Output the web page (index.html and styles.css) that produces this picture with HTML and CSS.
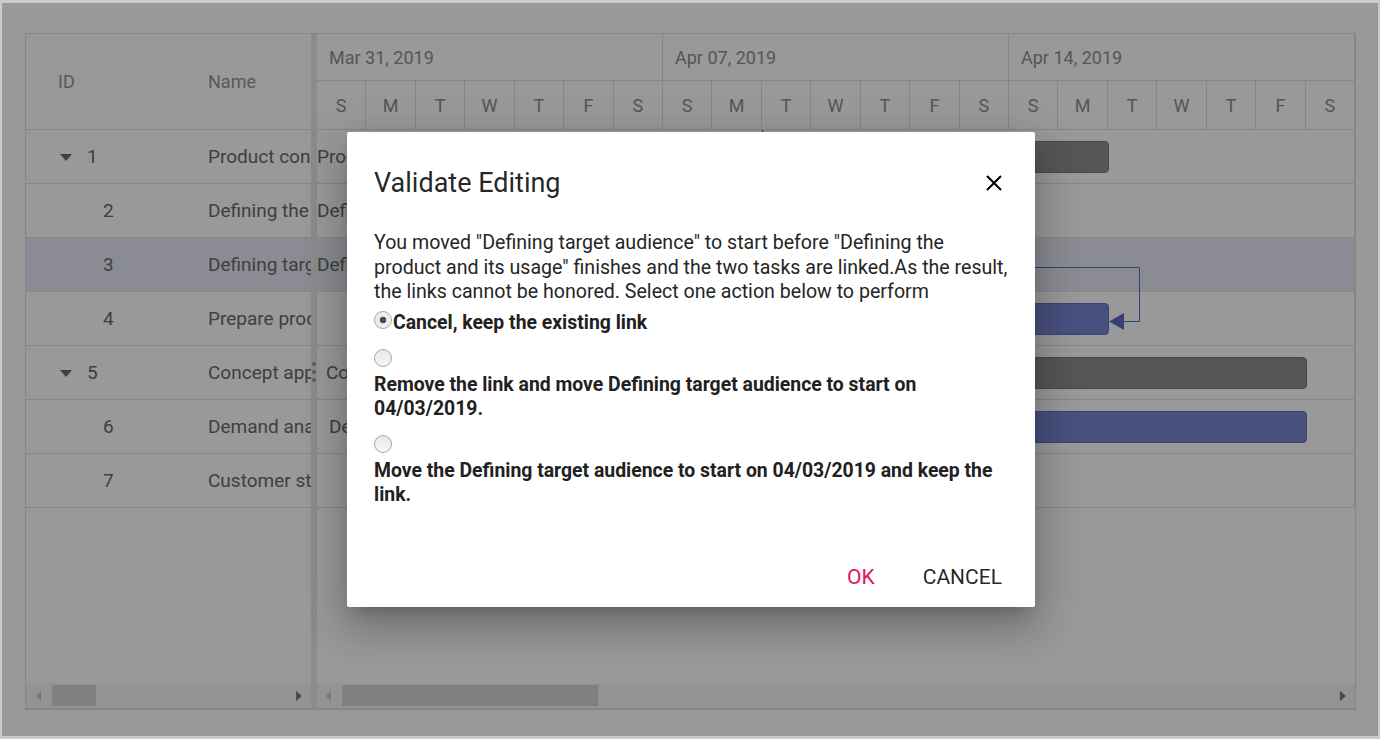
FILE: index.html
```html
<!DOCTYPE html>
<html lang="en">
<head>
<meta charset="utf-8">
<title>Gantt - Validate Editing</title>
<link rel="stylesheet" href="styles.css">
</head>
<body>
<div class="stage">
  <div class="gantt">
    <div class="grid-pane">
      <div class="grid-header">
        <div class="hcell id-col">ID</div>
        <div class="hcell name-col">Name</div>
      </div>
      <div class="grid-body">
        <div class="grow"><div class="cell id-col parent"><span class="expand"></span>1</div><div class="cell name-col">Product concept</div></div>
        <div class="grow"><div class="cell id-col child">2</div><div class="cell name-col">Defining the product and its usage</div></div>
        <div class="grow selected"><div class="cell id-col child">3</div><div class="cell name-col">Defining target audience</div></div>
        <div class="grow"><div class="cell id-col child">4</div><div class="cell name-col">Prepare product sketch and notes</div></div>
        <div class="grow"><div class="cell id-col parent"><span class="expand"></span>5</div><div class="cell name-col">Concept approval</div></div>
        <div class="grow"><div class="cell id-col child">6</div><div class="cell name-col">Demand analysis</div></div>
        <div class="grow"><div class="cell id-col child">7</div><div class="cell name-col">Customer strength</div></div>
      </div>
      <div class="empty"></div>
      <div class="hscroll grid-scroll">
        <span class="arr-left"></span>
        <span class="thumb grid-thumb"></span>
        <span class="fill"></span>
        <span class="arr-right"></span>
      </div>
    </div>
    <div class="splitter">
      <span class="dot"></span><span class="dot"></span><span class="dot"></span>
    </div>
    <div class="chart-pane">
      <div class="timeline">
        <div class="tier-top">
          <div class="tcell">Mar 31, 2019</div>
          <div class="tcell">Apr 07, 2019</div>
          <div class="tcell">Apr 14, 2019</div>
        </div>
        <div class="tier-bottom">
          <div class="dcell">S</div><div class="dcell">M</div><div class="dcell">T</div><div class="dcell">W</div><div class="dcell">T</div><div class="dcell">F</div><div class="dcell">S</div>
          <div class="dcell">S</div><div class="dcell">M</div><div class="dcell">T</div><div class="dcell">W</div><div class="dcell">T</div><div class="dcell">F</div><div class="dcell">S</div>
          <div class="dcell">S</div><div class="dcell">M</div><div class="dcell">T</div><div class="dcell">W</div><div class="dcell">T</div><div class="dcell">F</div><div class="dcell">S</div>
        </div>
      </div>
      <div class="chart-body">
        <div class="crow"><span class="tlabel">Product concept</span><span class="bar parent-bar" style="left:300px;width:492px"></span></div>
        <div class="crow"><span class="tlabel">Defining the product and its usage</span><span class="bar child-bar" style="left:300px;width:200px"></span></div>
        <div class="crow selected"><span class="tlabel">Defining target audience</span><span class="bar child-bar" style="left:450px;width:150px"></span></div>
        <div class="crow"><span class="bar child-bar" style="left:500px;width:292px"></span></div>
        <div class="crow"><span class="tlabel ind1">Concept approval</span><span class="bar parent-bar" style="left:500px;width:490px"></span></div>
        <div class="crow"><span class="tlabel ind2">Demand analysis</span><span class="bar child-bar" style="left:500px;width:490px"></span></div>
        <div class="crow"><span class="bar child-bar" style="left:560px;width:120px"></span></div>
        <span class="today"></span>
        <svg class="connector" width="1038" height="378" viewBox="0 0 1038 378">
          <path d="M600 137.5 H822.5 V191.5 H806" fill="none" stroke="#5c6bc0" stroke-width="1"/>
          <path d="M792 191.5 L807 183 L807 200 Z" fill="#5c6bc0"/>
        </svg>
      </div>
      <div class="empty"></div>
      <div class="hscroll chart-scroll">
        <span class="arr-left"></span>
        <span class="thumb chart-thumb"></span>
        <span class="fill"></span>
        <span class="arr-right"></span>
      </div>
    </div>
  </div>

  <div class="overlay">
    <div class="dialog" role="dialog">
      <div class="dlg-header">
        <div class="dlg-title">Validate Editing</div>
        <svg class="dlg-close" width="16" height="16" viewBox="0 0 16 16"><path d="M1 1 L15 15 M15 1 L1 15" stroke="#000" stroke-width="2" fill="none"/></svg>
      </div>
      <div class="dlg-content">
        <p class="dlg-text">You moved "Defining target audience" to start before "Defining the product and its usage" finishes and the two tasks are linked.As the result, the links cannot be honored. Select one action below to perform</p>
        <div class="option"><input class="radio" type="radio" name="act" checked><label class="opt-label">Cancel, keep the existing link</label></div>
        <div class="option"><input class="radio" type="radio" name="act"><label class="opt-label">Remove the link and move Defining target audience to start on 04/03/2019.</label></div>
        <div class="option"><input class="radio" type="radio" name="act"><label class="opt-label">Move the Defining target audience to start on 04/03/2019 and keep the link.</label></div>
      </div>
      <div class="dlg-footer">
        <button class="btn btn-ok">OK</button>
        <button class="btn btn-cancel">CANCEL</button>
      </div>
    </div>
  </div>
</div>
</body>
</html>
```
FILE: styles.css
```css
* { box-sizing: border-box; }
html, body { height: 100%; }
body {
  margin: 0;
  background: #cbcbcb;
  font-family: Roboto, "Liberation Sans", sans-serif;
  overflow: hidden;
}
.stage {
  position: relative;
  margin: 3px 2px;
  height: 733px;
  background: #fff;
  overflow: hidden;
}
.gantt {
  margin: 30px 0 0 23px;
  width: 1331px;
  height: 677px;
  border: 1px solid #e0e0e0;
  display: flex;
}
.grid-pane {
  width: 285px;
  display: flex;
  flex-direction: column;
}
.grid-header {
  height: 96px;
  border-bottom: 1px solid #e0e0e0;
  display: flex;
  align-items: center;
  color: #949494;
  font-size: 18px;
}
.id-col { width: 157px; flex: none; }
.name-col { flex: 1; min-width: 0; padding-left: 25px; white-space: nowrap; overflow: hidden; }
.hcell.id-col { padding-left: 32px; }
.grow, .crow {
  height: 54px;
  border-bottom: 1px solid #e0e0e0;
}
.grow {
  display: flex;
  align-items: center;
  font-size: 19px;
  color: #6a6a6a;
}
.selected { background: #e8eaf6; }
.cell.parent { padding-left: 34px; display: flex; align-items: center; }
.cell.child { padding-left: 77px; }
.expand {
  width: 0; height: 0;
  border-left: 6.5px solid transparent;
  border-right: 6.5px solid transparent;
  border-top: 7px solid #6a6a6a;
  margin-right: 15px;
  margin-top: 1px;
}
.empty { flex: 1; }
.hscroll {
  height: 26px;
  background: #f5f5f5;
  border-bottom: 1px solid #e0e0e0;
  display: flex;
  align-items: center;
  padding: 0 9px;
}
.grid-scroll { padding-left: 10px; }
.arr-left {
  width: 0; height: 0;
  border-top: 5px solid transparent;
  border-bottom: 5px solid transparent;
  border-right: 5px solid #c8c8c8;
}
.arr-right {
  width: 0; height: 0;
  border-top: 5px solid transparent;
  border-bottom: 5px solid transparent;
  border-left: 6px solid #7a7a7a;
}
.thumb {
  height: 21px;
  margin-left: 11px;
  background: #d5d5d5;
}
.grid-thumb { width: 44px; }
.chart-thumb { width: 256px; }
.fill { flex: 1; }
.splitter {
  width: 6px;
  background: #e8e8e8;
  display: flex;
  flex-direction: column;
  align-items: center;
  gap: 4px;
  padding-top: 328px;
}
.dot {
  width: 4px; height: 4px;
  border-radius: 50%;
  background: #9e9e9e;
}
.chart-pane {
  width: 1038px;
  display: flex;
  flex-direction: column;
}
.timeline {
  height: 96px;
  border-bottom: 1px solid #e0e0e0;
  color: #8f8f8f;
  font-size: 18px;
}
.tier-top {
  height: 47px;
  border-bottom: 1px solid #e0e0e0;
  display: grid;
  grid-template-columns: repeat(3, 1fr);
}
.tcell {
  border-right: 1px solid #e0e0e0;
  padding-left: 12px;
  display: flex;
  align-items: center;
}
.tier-bottom {
  height: 48px;
  display: grid;
  grid-template-columns: repeat(21, 1fr);
}
.dcell {
  border-right: 1px solid #e0e0e0;
  display: flex;
  align-items: center;
  justify-content: center;
}
.chart-body {
  position: relative;
  height: 378px;
  border-right: 1px solid #e0e0e0;
}
.crow {
  position: relative;
  font-size: 19px;
  color: #6a6a6a;
}
.tlabel {
  position: absolute;
  left: 0;
  top: 0;
  line-height: 54px;
  white-space: nowrap;
}
.tlabel.ind1 { left: 9px; }
.tlabel.ind2 { left: 12px; }
.bar {
  position: absolute;
  top: 11px;
  height: 32px;
  border-radius: 4px;
}
.parent-bar { background: #8f8f8f; border: 1px solid #7a7a7a; }
.child-bar { background: #7885d2; border: 1px solid #6272c9; }
.today {
  position: absolute;
  left: 445px;
  top: 0;
  width: 1px;
  height: 378px;
  background: #e3165b;
}
.connector {
  position: absolute;
  left: 0;
  top: 0;
}

/* overlay & dialog */
.overlay {
  position: absolute;
  inset: 0;
  background: rgba(0, 0, 0, 0.4);
  display: flex;
  align-items: center;
  justify-content: center;
  padding-left: 2px;
}
.dialog {
  width: 688px;
  background: #fff;
  border-radius: 2px;
  box-shadow: 0 11px 15px -7px rgba(0,0,0,.2), 0 24px 38px 3px rgba(0,0,0,.14), 0 9px 46px 8px rgba(0,0,0,.12);
}
.dlg-header {
  display: flex;
  align-items: center;
  justify-content: space-between;
  padding: 35px 27px 0 27px;
}
.dlg-title {
  font-size: 27px;
  line-height: 32px;
  color: rgba(0,0,0,.87);
}
.dlg-close { margin-right: 6px; }
.dlg-content {
  padding: 32px 27px 0 27px;
  color: #262626;
}
.dlg-text {
  margin: 0 0 6px 0;
  font-size: 19.6px;
  line-height: 24.5px;
}
.option {
  display: flex;
  flex-wrap: wrap;
  align-items: flex-start;
  margin-top: 14px;
}
.option:first-of-type { margin-top: 0; }
.radio {
  appearance: none;
  -webkit-appearance: none;
  width: 18px;
  height: 18px;
  margin: 0 1px 6px 0;
  border-radius: 50%;
  border: 1px solid #a8a8a8;
  background: linear-gradient(#e9e9e9, #f6f6f6);
  flex: none;
}
.radio:checked {
  background: radial-gradient(circle, #4d4d4d 0 3px, #e9e9e9 3.6px, #f4f4f4 100%);
}
.opt-label {
  font-size: 19.4px;
  font-weight: 700;
  line-height: 24px;
  color: #212121;
}
.dlg-footer {
  display: flex;
  justify-content: flex-end;
  gap: 36px;
  padding: 52px 27px 12px 27px;
}
.btn {
  font-family: Roboto, "Liberation Sans", sans-serif;
  font-size: 21px;
  height: 36px;
  padding: 0 6px;
  border: none;
  background: transparent;
  color: rgba(0,0,0,.87);
}
.btn-ok { color: #e3165b; }
```
